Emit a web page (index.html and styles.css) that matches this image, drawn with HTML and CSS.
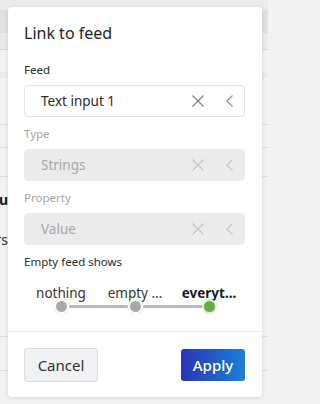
FILE: index.html
```html
<!DOCTYPE html>
<html>
<head>
<meta charset="utf-8">
<link rel="stylesheet" href="styles.css">
</head>
<body>
<div class="page">
  <div class="topbar"><div class="topband"></div></div>
  <div class="bgrow h22"></div>
  <div class="bgrow h6 shade"></div>
  <div class="bgrow h47 line"></div>
  <div class="bgrow h23 line"></div>
  <div class="bgrow h29 line"></div>
  <div class="bgrow h12"></div>
  <div class="bgrow h20"><span class="frag bold">Menu</span></div>
  <div class="bgrow h20"></div>
  <div class="bgrow h20"><span class="frag">Users</span></div>
  <div class="bgrow h88 line"></div>
  <div class="bgrow h34 line"></div>
</div>

<div class="dialog">
  <div class="body">
    <h1 class="title">Link to feed</h1>

    <div class="label first">Feed</div>
    <div class="input">
      <span class="val">Text input 1</span>
      <svg class="ico-x" width="12" height="12" viewBox="0 0 12 12"><path d="M0.5 0.5L11.5 11.5M11.5 0.5L0.5 11.5" stroke="currentColor" stroke-width="1.1" fill="none"/></svg>
      <svg class="ico-c" width="7" height="12" viewBox="0 0 7 12"><path d="M6.5 0.5L0.8 6L6.5 11.5" stroke="currentColor" stroke-width="1.1" fill="none"/></svg>
    </div>

    <div class="label disabled">Type</div>
    <div class="input off">
      <span class="val">Strings</span>
      <svg class="ico-x" width="12" height="12" viewBox="0 0 12 12"><path d="M0.5 0.5L11.5 11.5M11.5 0.5L0.5 11.5" stroke="currentColor" stroke-width="1.1" fill="none"/></svg>
      <svg class="ico-c" width="7" height="12" viewBox="0 0 7 12"><path d="M6.5 0.5L0.8 6L6.5 11.5" stroke="currentColor" stroke-width="1.1" fill="none"/></svg>
    </div>

    <div class="label disabled">Property</div>
    <div class="input off">
      <span class="val">Value</span>
      <svg class="ico-x" width="12" height="12" viewBox="0 0 12 12"><path d="M0.5 0.5L11.5 11.5M11.5 0.5L0.5 11.5" stroke="currentColor" stroke-width="1.1" fill="none"/></svg>
      <svg class="ico-c" width="7" height="12" viewBox="0 0 7 12"><path d="M6.5 0.5L0.8 6L6.5 11.5" stroke="currentColor" stroke-width="1.1" fill="none"/></svg>
    </div>

    <div class="label">Empty feed shows</div>
    <div class="slider">
      <div class="opts">
        <span class="opt">nothing</span>
        <span class="opt">empty ...</span>
        <span class="opt sel">everyt...</span>
      </div>
      <div class="track">
        <div class="rail"></div>
        <span class="dotcell"><span class="dot"></span></span>
        <span class="dotcell"><span class="dot"></span></span>
        <span class="dotcell"><span class="dot on"></span></span>
      </div>
    </div>
  </div>
  <div class="footer">
    <button class="btn cancel">Cancel</button>
    <button class="btn apply">Apply</button>
  </div>
</div>
</body>
</html>
```

FILE: styles.css
```css
* { box-sizing: border-box; }
html { background: #f3f3f3; }
html, body { margin: 0; padding: 0; }
body {
  width: 268px;
  height: 404px;
  overflow: hidden;
  position: relative;
  background: #f3f3f3;
  font-family: "Noto Sans", "Open Sans", sans-serif;
  color: #252525;
}

.page { display: flex; flex-direction: column; }
.topbar { height: 50px; background: #ebebeb; border-bottom: 1px solid #dadada; padding-top: 10px; }
.topband { height: 23px; background: #e0e0e0; }
.bgrow { flex: none; display: flex; align-items: center; }
.bgrow.line { border-bottom: 1px solid #dedede; }
.shade { background: #e9e9e9; }
.h6 { height: 6px; } .h12 { height: 12px; } .h20 { height: 20px; } .h22 { height: 22px; }
.h23 { height: 23px; } .h29 { height: 29px; } .h34 { height: 34px; } .h47 { height: 47px; } .h88 { height: 88px; }
.frag {
  width: 8px; overflow: hidden; display: flex; justify-content: flex-end;
  white-space: nowrap; font-size: 14px; color: #333;
}
.frag.bold { font-weight: 700; color: #1a1a1a; }

.dialog {
  position: absolute;
  left: 8px; top: 7px;
  width: 254px; height: 390px;
  background: #fff;
  border-radius: 4px;
  box-shadow: 0 1px 4px rgba(0,0,0,0.13);
  display: flex; flex-direction: column;
}
.body { padding: 16px 17px 0 16px; flex: 1; }
.title { margin: 0; font-size: 16px; line-height: 20px; font-weight: 400; color: #1e1e1e; }

.label { font-size: 11.5px; line-height: 16px; margin-top: 9px; color: #2a2a2a; }
.label.first { margin-top: 19px; }
.label.disabled { color: #a3a3a3; }

.input {
  margin-top: 7px;
  height: 32px;
  border: 1px solid #e4e4de;
  border-radius: 4px;
  display: flex; align-items: center;
  padding: 0 11px 0 16px;
  font-size: 13.5px; color: #2b2b2b;
}
.input .val { flex: 1; }
.ico-x { color: #7a7a7a; display: block; }
.ico-c { color: #8a8a8a; display: block; margin-left: 22px; }
.input.off { background: #ebebeb; border-color: #ebebeb; color: #a9a9a9; }
.input.off .ico-x, .input.off .ico-c { color: #c2c2c2; }

.slider { margin-top: 15px; }
.opts { display: grid; grid-template-columns: repeat(3, 74px); }
.opt { text-align: center; font-size: 13.5px; line-height: 16px; color: #333; white-space: nowrap; }
.opt.sel { font-weight: 700; color: #1a1a1a; }
.track {
  position: relative;
  display: grid; grid-template-columns: repeat(3, 74px);
  height: 15px; margin-top: -2px;
}
.rail { position: absolute; left: 37px; right: 37px; top: 6px; height: 3px; background: #b8b8b8; border-radius: 2px; }
.dotcell { display: flex; justify-content: center; align-items: center; position: relative; }
.dot {
  width: 15px; height: 15px; border-radius: 50%;
  background: #a9a9a9; border: 2px solid #fff;
  box-shadow: 0 0 0 0.5px #e4e4e4;
}
.dot.on { background: #6aab43; border-color: #dcefd1; box-shadow: none; }

.footer {
  border-top: 1px solid #ececec;
  height: 66px;
  padding: 16px 17px 15px 16px;
  display: flex; justify-content: space-between; align-items: center;
}
.btn { font-family: inherit; font-size: 15px; cursor: pointer; }
.cancel {
  width: 74px; height: 34px;
  background: #f0f1f3; border: 1px solid #dcdddf; border-radius: 3px; color: #333;
}
.apply {
  width: 64px; height: 32px;
  background: linear-gradient(to right, #2a35b4, #1c80d6);
  border: none; border-radius: 3px; color: #fff; font-weight: 500;
}
```
